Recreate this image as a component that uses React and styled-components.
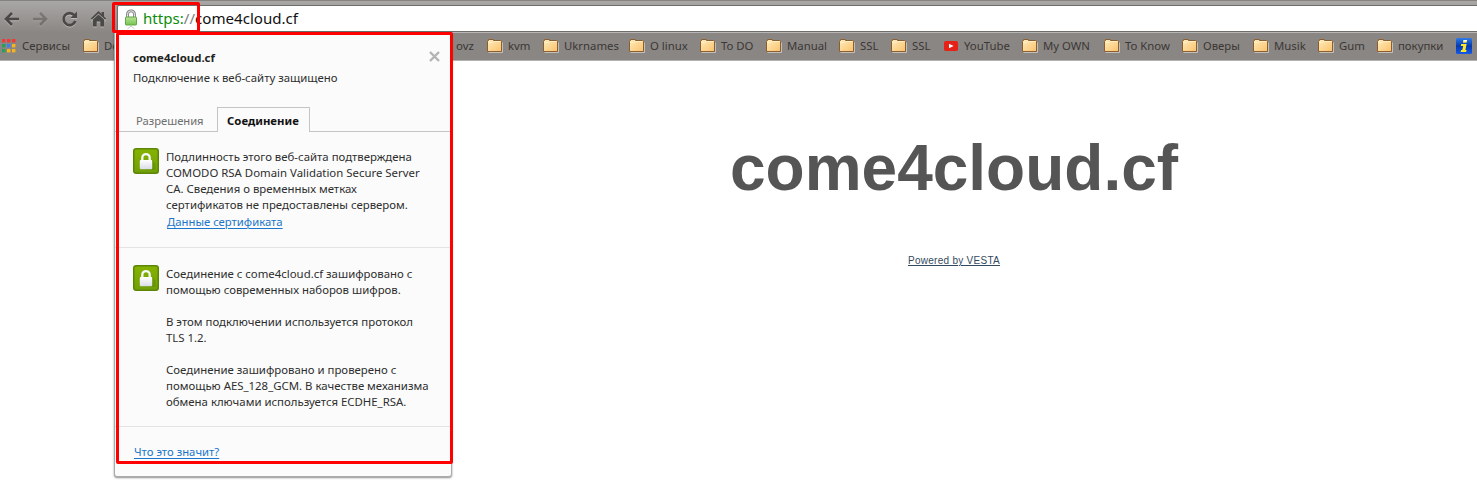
import React from "react";
import styled, { createGlobalStyle } from "styled-components";

const Global = createGlobalStyle`
  * { box-sizing: border-box; }
  html, body { margin: 0; padding: 0; background: #fff; }
  body { font-family: "Noto Sans", "Open Sans", sans-serif; }
  p, h1, h2 { margin: 0; font-weight: 400; }
`;

const Window = styled.div`
  position: relative;
  width: 1477px;
  height: 485px;
  overflow: hidden;
  background: #fff;
`;

const Chrome = styled.header`
  display: flex;
  flex-direction: column;
  height: 61px;
  border-top: 1px solid #858280;
  border-bottom: 1px solid #b3b1af;
  background: linear-gradient(#a9a7a5 0, #a5a3a1 4px, #8a8683 32px, #8a8683 100%);
`;

const Toolbar = styled.div`
  display: flex;
  flex: 0 0 32px;
  padding-top: 4px;
`;

const NavButtons = styled.div`
  display: flex;
  align-items: center;
  width: 117px;
  height: 27px;
  padding-left: 3px;
  gap: 12px;
`;

const NavIcon = styled.svg`
  display: block;
  flex: none;
  width: 17px;
  height: 18px;
  opacity: ${(p) => (p.$dim ? 0.42 : 1)};
  filter: drop-shadow(0 1px 0 rgba(255, 255, 255, 0.35));
`;

const AddressBar = styled.div`
  display: flex;
  align-items: center;
  flex: 1;
  height: 27px;
  padding-left: 7px;
  border: 1px solid #6f6c6a;
  border-right: 0;
  border-radius: 2px 0 0 2px;
  background: #fff;
  box-shadow: 0 1px 0 #b9b7b5;
`;

const Url = styled.div`
  display: flex;
  margin: -1px 0 0 6px;
  font-size: 15.1px;
  line-height: 20px;
  color: #111;
`;
const Scheme = styled.span`color: #0b8d0b;`;
const Slashes = styled.span`color: #808080;`;

const BookmarksBar = styled.nav`
  display: flex;
  align-items: center;
  height: 27px;
  padding-bottom: 1px;
`;

const Bookmark = styled.div`
  display: flex;
  align-items: center;
  flex: none;
  width: ${(p) => p.$width}px;
  gap: ${(p) => p.$gap || 5}px;
  font-size: 11.35px;
  line-height: 16px;
  white-space: nowrap;
  color: #3b3735;
`;

const BookmarkIcon = styled.svg`
  display: block;
  flex: none;
  width: 16px;
  height: 16px;
`;

const Page = styled.main`
  display: flex;
  flex-direction: column;
  align-items: center;
  padding: 70px 0 0 431px;
  font-family: "Liberation Sans", Arial, sans-serif;
`;

const SiteTitle = styled.h1`
  font-size: 64px;
  line-height: 74px;
  font-weight: 700;
  color: #555;
`;

const Powered = styled.a`
  margin-top: 50px;
  font-size: 10px;
  line-height: 12px;
  letter-spacing: 0.28px;
  color: #34495e;
  text-decoration: underline;
  text-underline-offset: 1px;
`;

const Popup = styled.section`
  position: absolute;
  left: 114px;
  top: 32px;
  width: 338px;
  height: 445px;
  border: 1px solid #aaa;
  border-radius: 0 0 3px 3px;
  background: #fbfbfb;
  box-shadow: 0 1px 2px rgba(0, 0, 0, 0.45);
  font-size: 11.4px;
  line-height: 16px;
  color: #2e2e2e;
`;

const PopupHeader = styled.div`
  display: flex;
  justify-content: space-between;
  height: 74px;
  padding: 17px 11px 0 18px;
`;

const PopupTitle = styled.h2`
  margin-bottom: 4px;
  font-size: 11.4px;
  line-height: 16px;
  font-weight: 700;
  color: #222;
`;

const CloseIcon = styled.svg`
  width: 11px;
  height: 11px;
  margin-top: 1px;
`;

const Tabs = styled.div`
  display: flex;
  height: 25px;
  border-bottom: 1px solid #c4c4c4;
`;

const Tab = styled.div`
  height: 25px;
  width: ${(p) => p.$width}px;
  padding: ${(p) => (p.$active ? "5px 0 0 9px" : "6px 0 0 21px")};
  border: ${(p) => (p.$active ? "1px solid #c4c4c4" : "0")};
  border-bottom: 0;
  background: ${(p) => (p.$active ? "#fbfbfb" : "transparent")};
  font-size: ${(p) => (p.$active ? 11.4 : 11.2)}px;
  font-weight: ${(p) => (p.$active ? 700 : 400)};
  color: ${(p) => (p.$active ? "#111" : "#6e6e6e")};
`;

const Section = styled.div`
  display: flex;
  height: ${(p) => p.$height}px;
  padding: ${(p) => p.$top}px 0 0 18px;
  gap: 7px;
  border-bottom: 1px solid #e4e4e4;
`;

const LockBadge = styled.svg`
  display: block;
  flex: none;
  width: 26px;
  height: 26px;
`;

const SectionText = styled.div`
  padding-top: 1px;
  white-space: nowrap;
`;

const Paragraph = styled.p`margin-bottom: ${(p) => p.$gap || 0}px;`;

const Line = styled.span`display: block;`;

const Link = styled.a`
  display: inline-block;
  margin-left: 1px;
  font-size: 11.3px;
  line-height: 16px;
  color: #1a76c9;
  text-decoration: underline;
  text-underline-offset: 2px;
  text-decoration-thickness: 1px;
`;

const PopupFooter = styled.div`padding: 17px 0 0 18px;`;

const Highlight = styled.div`
  position: absolute;
  border: 3px solid #f00;
  border-radius: 2px;
`;
const UrlHighlight = styled(Highlight)`left: 112px; top: 2px; width: 88px; height: 31px;`;
const PopupHighlight = styled(Highlight)`left: 116px; top: 32px; width: 337px; height: 432px;`;

const FolderIcon = () => (
  <BookmarkIcon viewBox="0 0 16 16">
    <defs>
      <linearGradient id="folder" x1="0" y1="0" x2="1" y2="1">
        <stop offset="0" stopColor="#ffedbd" />
        <stop offset="1" stopColor="#fbc16a" />
      </linearGradient>
    </defs>
    <path d="M1.5 14.5h14v-10" fill="none" stroke="#c3bfbb" />
    <path d="M.5 13.5v-10q0-1 1-1v-1h5v1h7q1 0 1 1v10z" fill="url(#folder)" stroke="#8b5e31" />
    <path d="M1.5 4.5h4l1-1h7" fill="none" stroke="#fff0cc" />
  </BookmarkIcon>
);

const AppsIcon = () => {
  const colors = ["#ee3b35", "#ee3b35", "#ee3b35", "#28a05c", "#3e82ee", "#f5b51b", "#28a05c", "#f5b51b", "#f5b51b"];
  return (
    <BookmarkIcon viewBox="0 0 16 16">
      {colors.map((c, i) => (
        <rect key={i} x={2 + (i % 3) * 5} y={1 + Math.floor(i / 3) * 5} width="3.4" height="3.4" fill={c} />
      ))}
    </BookmarkIcon>
  );
};

const YouTubeIcon = () => (
  <BookmarkIcon viewBox="0 0 16 16">
    <rect x="0" y="3" width="14" height="10" rx="1.8" fill="#e62117" />
    <path d="M5 5.8v4.4L9.6 8z" fill="#fff" />
  </BookmarkIcon>
);

const InfoIcon = () => (
  <BookmarkIcon viewBox="0 0 16 16">
    <defs>
      <linearGradient id="info" x1="0" y1="0" x2="0" y2="1">
        <stop offset="0" stopColor="#2d7bea" />
        <stop offset=".5" stopColor="#0639ad" />
        <stop offset="1" stopColor="#1459ea" />
      </linearGradient>
    </defs>
    <rect width="16" height="16" rx="1.5" fill="url(#info)" />
    <path d="M7.5 2h3.6l-.6 2.8H7zM5.2 6h5.4L9.4 12h1.2l-.5 2H4.6l.5-2h1.2l.9-4H4.8z" fill="#ffe72a" />
    <path d="M7.6 2h3.4l-.2 1.4H7.3z" fill="#fff" />
  </BookmarkIcon>
);

const GreenLock = () => (
  <LockBadge viewBox="0 0 26 26">
    <defs>
      <linearGradient id="badge" x1="0" y1="0" x2="0" y2="1">
        <stop offset="0" stopColor="#86b300" />
        <stop offset="1" stopColor="#6f9f07" />
      </linearGradient>
      <linearGradient id="lockbody" x1="0" y1="0" x2="0" y2="1">
        <stop offset="0" stopColor="#fff" />
        <stop offset="1" stopColor="#d9dde5" />
      </linearGradient>
    </defs>
    <rect x=".75" y=".75" width="24.5" height="24.5" rx="2.5" fill="url(#badge)" stroke="#5c8706" strokeWidth="1.5" />
    <path d="M19 12l3.5 3.5V22h-8L8 21z" fill="#4d7500" opacity=".3" />
    <path d="M9.3 13V9.8a3.7 3.7 0 0 1 7.4 0V13" fill="none" stroke="#f7f8fa" strokeWidth="2.3" />
    <rect x="6.8" y="12" width="12.4" height="9.2" rx="1" fill="url(#lockbody)" />
  </LockBadge>
);

const UrlLockSvg = styled.svg`
  flex: none;
  width: 12px;
  height: 20px;
  margin-top: 1px;
  overflow: visible;
`;

const UrlLock = () => (
  <UrlLockSvg viewBox="0 0 12 20">
    <defs>
      <linearGradient id="urllock" x1="0" y1="0" x2="0" y2="1">
        <stop offset="0" stopColor="#b9e396" />
        <stop offset="1" stopColor="#74c550" />
      </linearGradient>
    </defs>
    <path d="M2.5 8V5.3a3.5 3.5 0 0 1 7 0V8" fill="none" stroke="#808080" strokeWidth="2.8" />
    <path d="M2.5 8V5.3a3.5 3.5 0 0 1 7 0V8" fill="none" stroke="#ececec" strokeWidth="1" />
    <rect x=".5" y="8" width="11" height="8" rx=".6" fill="url(#urllock)" stroke="#64a648" />
    <path d="M2.5 20l3.5-3 3.5 3" fill="#fff" stroke="#bbb" strokeWidth=".8" />
  </UrlLockSvg>
);

const folders = [
  ["kvm", 56],
  ["Ukrnames", 86],
  ["O linux", 71],
  ["To DO", 66],
  ["Manual", 73],
  ["SSL", 52],
  ["SSL", 53],
];
const moreFolders = [
  ["My OWN", 82],
  ["To Know", 78],
  ["Оверы", 71],
  ["Musik", 65],
  ["Gum", 59],
  ["покупки", 79],
];

const FolderList = ({ items }) =>
  items.map(([name, width], i) => (
    <Bookmark key={i} $width={width}>
      <FolderIcon />
      {name}
    </Bookmark>
  ));

export default function App() {
  return (
    <Window>
      <Global />
      <Chrome>
        <Toolbar>
          <NavButtons>
            <NavIcon viewBox="0 0 17 18">
              <path d="M16 9H3M9 3L3 9l6 6" fill="none" stroke="#4b4947" strokeWidth="2.6" />
            </NavIcon>
            <NavIcon $dim viewBox="0 0 17 18">
              <path d="M1 9h13M8 3l6 6-6 6" fill="none" stroke="#4b4947" strokeWidth="2.6" />
            </NavIcon>
            <NavIcon viewBox="0 0 17 18">
              <path d="M13.2 5.2A6 6 0 1 0 14.3 11" fill="none" stroke="#4b4947" strokeWidth="2.7" />
              <path d="M16 1.5V8H9.5z" fill="#4b4947" />
            </NavIcon>
            <NavIcon viewBox="0 0 17 18">
              <path d="M3 9.5l5.5-5 5.5 5V16.5H10.3v-5H6.7v5H3z" fill="#4b4947" />
              <path d="M1 10.4l7.5-7 7.5 7" fill="none" stroke="#a09d9b" strokeWidth="1" />
              <path d="M8.5 1L.8 8.4 2 9.6l6.5-6.1L15 9.6l1.2-1.2-2.2-2V2h-2.4v2z" fill="#4b4947" />
            </NavIcon>
          </NavButtons>
          <AddressBar>
            <UrlLock />
            <Url>
              <Scheme>https:</Scheme>
              <Slashes>//</Slashes>
              <span>come4cloud.cf</span>
            </Url>
          </AddressBar>
        </Toolbar>
        <BookmarksBar>
          <Bookmark $width={83} $gap={6}>
            <AppsIcon />
            Сервисы
          </Bookmark>
          <Bookmark $width={352}>
            <FolderIcon />
            Domains
          </Bookmark>
          <Bookmark $width={52}>
            <FolderIcon />
            ovz
          </Bookmark>
          <FolderList items={folders} />
          <Bookmark $width={78} $gap={4}>
            <YouTubeIcon />
            YouTube
          </Bookmark>
          <FolderList items={moreFolders} />
          <InfoIcon />
        </BookmarksBar>
      </Chrome>

      <Page>
        <SiteTitle>come4cloud.cf</SiteTitle>
        <Powered>Powered by VESTA</Powered>
      </Page>

      <Popup>
        <PopupHeader>
          <div>
            <PopupTitle>come4cloud.cf</PopupTitle>
            <p>Подключение к веб-сайту защищено</p>
          </div>
          <CloseIcon viewBox="0 0 11 11">
            <path d="M1 1l9 9M10 1l-9 9" stroke="#b4b4b4" strokeWidth="2.4" />
          </CloseIcon>
        </PopupHeader>
        <Tabs>
          <Tab $width={102}>Разрешения</Tab>
          <Tab $active $width={93}>Соединение</Tab>
        </Tabs>
        <Section $height={116} $top={16}>
          <GreenLock />
          <SectionText>
            <Paragraph $gap={1}>
              <Line>Подлинность этого веб-сайта подтверждена</Line>
              <Line>COMODO RSA Domain Validation Secure Server</Line>
              <Line>CA. Сведения о временных метках</Line>
              <Line>сертификатов не предоставлены сервером.</Line>
            </Paragraph>
            <Link>Данные сертификата</Link>
          </SectionText>
        </Section>
        <Section $height={179} $top={17}>
          <GreenLock />
          <SectionText>
            <Paragraph $gap={16}>
              <Line>Соединение с come4cloud.cf зашифровано с</Line>
              <Line>помощью современных наборов шифров.</Line>
            </Paragraph>
            <Paragraph $gap={16}>
              <Line>В этом подключении используется протокол</Line>
              <Line>TLS 1.2.</Line>
            </Paragraph>
            <Paragraph>
              <Line>Соединение зашифровано и проверено с</Line>
              <Line>помощью AES_128_GCM. В качестве механизма</Line>
              <Line>обмена ключами используется ECDHE_RSA.</Line>
            </Paragraph>
          </SectionText>
        </Section>
        <PopupFooter>
          <Link>Что это значит?</Link>
        </PopupFooter>
      </Popup>

      <UrlHighlight />
      <PopupHighlight />
    </Window>
  );
}
